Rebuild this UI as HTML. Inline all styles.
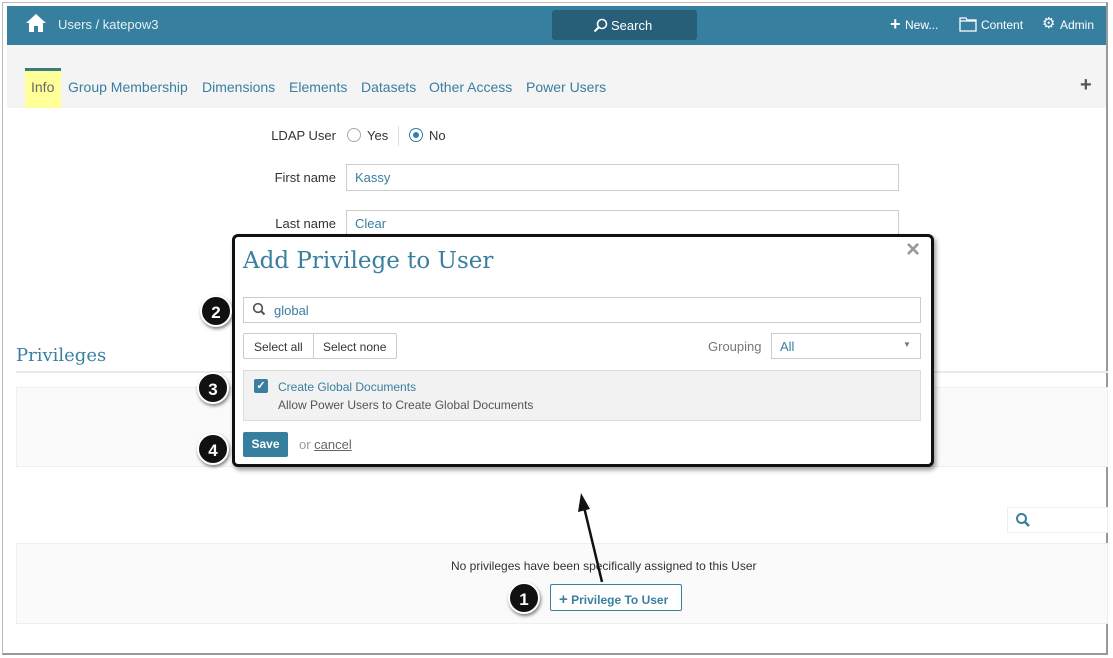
<!DOCTYPE html>
<html><head><meta charset="utf-8"><style>
*{box-sizing:border-box;margin:0;padding:0}
body{width:1113px;height:658px;background:#fff;font-family:"Liberation Sans",sans-serif;position:relative;overflow:hidden;font-size:13px;color:#333}
.a{position:absolute}
.frame{left:2px;top:2px;width:1106px;height:653px;border:1px solid #bbb;border-right:2px solid #999;border-bottom:2px solid #999}
.hdr{left:7px;top:6px;width:1099px;height:39px;background:#377f9e;color:#fff}
.tabs{left:7px;top:45px;width:1099px;height:63px;background:#f4f4f4}
.tab{top:79px;font-size:14px;color:#3a7ea0}
.lbl{font-size:13px;color:#333;text-align:right;width:100px}
.inp{border:1px solid #ccc;height:27px;font-size:13px;color:#3a7ea0;padding:5px 8px;background:#fff}
.num{width:32px;height:32px;border-radius:50%;background:#111;color:#fff;font-weight:bold;font-size:17px;text-align:center;line-height:31px;border:2px solid #fff;box-shadow:1px 2px 3px rgba(0,0,0,.5)}
</style></head><body>
<div class="a frame"></div>
<div class="a hdr">
 <svg class="a" style="left:18px;top:7px" width="22" height="20" viewBox="0 0 22 20"><path d="M11 1 L1 10 L4 10 L4 19 L9 19 L9 13 L13 13 L13 19 L18 19 L18 10 L21 10 Z" fill="#fff"/></svg>
 <div class="a" style="left:51px;top:11px;font-size:13px;color:#e6f0f5">Users / katepow3</div>
 <div class="a" style="left:545px;top:4px;width:145px;height:30px;background:#275e78;border-radius:3px"></div>
 <svg class="a" style="left:586px;top:12px" width="15" height="15" viewBox="0 0 15 15"><circle cx="9" cy="6" r="4.5" stroke="#fff" stroke-width="1.6" fill="none"/><path d="M5.5 9.5 L1.5 13.5" stroke="#fff" stroke-width="2"/></svg>
 <div class="a" style="left:604px;top:12px;font-size:13px">Search</div>
 <div class="a" style="left:883px;top:9px;font-size:18px;font-weight:bold;line-height:18px">+</div>
 <div class="a" style="left:898px;top:12px;font-size:12px">New...</div>
 <svg class="a" style="left:952px;top:10px" width="18" height="16" viewBox="0 0 18 16"><path d="M1 2 H7 L8 4 H17 V15 H1 Z M1 5 H17" stroke="#fff" stroke-width="1.3" fill="none"/></svg>
 <div class="a" style="left:974px;top:12px;font-size:12px">Content</div>
 <div class="a" style="left:1035px;top:8px;font-size:15px">⚙</div>
 <div class="a" style="left:1053px;top:12px;font-size:12px">Admin</div>
</div>
<div class="a tabs"></div>
<div class="a" style="left:25px;top:68px;width:36px;height:40px;background:#ffff99;border-top:3px solid #3a7d7c"></div>
<div class="a tab" style="left:31px;color:#666">Info</div>
<div class="a tab" style="left:68px">Group Membership</div>
<div class="a tab" style="left:202px">Dimensions</div>
<div class="a tab" style="left:289px">Elements</div>
<div class="a tab" style="left:361px">Datasets</div>
<div class="a tab" style="left:429px">Other Access</div>
<div class="a tab" style="left:526px">Power Users</div>
<div class="a" style="left:1080px;top:74px;font-size:20px;font-weight:bold;color:#555">+</div>

<div class="a lbl" style="left:236px;top:128px">LDAP User</div>
<div class="a" style="left:347px;top:128px;width:14px;height:14px;border:1px solid #aaa;border-radius:50%"></div>
<div class="a" style="left:367px;top:128px">Yes</div>
<div class="a" style="left:398px;top:126px;width:1px;height:20px;background:#ddd"></div>
<div class="a" style="left:409px;top:128px;width:14px;height:14px;border:1px solid #3a7ea0;border-radius:50%"><div style="margin:3px;width:6px;height:6px;border-radius:50%;background:#3a7ea0"></div></div>
<div class="a" style="left:429px;top:128px">No</div>
<div class="a lbl" style="left:236px;top:170px">First name</div>
<div class="a inp" style="left:346px;top:164px;width:553px">Kassy</div>
<div class="a lbl" style="left:236px;top:216px">Last name</div>
<div class="a inp" style="left:346px;top:210px;width:553px">Clear</div>

<div class="a" style="left:16px;top:345px;font-family:'DejaVu Serif',serif;font-size:18px;color:#3a7ea0">Privileges</div>
<div class="a" style="left:16px;top:371px;width:1092px;height:2px;background:#e3ecf0"></div>
<div class="a" style="left:16px;top:387px;width:1092px;height:80px;background:#fafafa;border:1px solid #eee"></div>
<div class="a" style="left:1007px;top:507px;width:101px;height:26px;border:1px solid #eee;background:#fff"></div>
<svg class="a" style="left:1015px;top:512px" width="16" height="16" viewBox="0 0 16 16"><circle cx="6.5" cy="6.5" r="4.5" stroke="#3a7ea0" stroke-width="2" fill="none"/><path d="M10 10 L14 14" stroke="#3a7ea0" stroke-width="2.5"/></svg>
<div class="a" style="left:16px;top:543px;width:1092px;height:81px;background:#fafafa;border:1px solid #eee"></div>
<div class="a" style="left:451px;top:559px;font-size:12px">No privileges have been specifically assigned to this User</div>
<div class="a" style="left:550px;top:584px;width:132px;height:27px;border:1px solid #3a7ea0;border-radius:2px;background:#fff;color:#3a7ea0;font-size:12px;font-weight:bold;padding:6px 0 0 8px"><span style="font-size:15px">+</span> Privilege To User</div>
<div class="a num" style="left:508px;top:582px">1</div>
<svg class="a" style="left:570px;top:485px" width="40" height="100"><path d="M32 97 L14 22" stroke="#111" stroke-width="2.5"/><path d="M11 8 L20 24 L8 27 Z" fill="#111"/></svg>

<div class="a" style="left:232px;top:234px;width:702px;height:233px;border:3px solid #111;border-radius:6px;background:#fff;box-shadow:2px 3px 5px rgba(0,0,0,.4)"></div>
<div class="a" style="left:243px;top:248px;font-family:'DejaVu Serif',serif;font-size:23px;color:#3a7ea0">Add Privilege to User</div>
<div class="a" style="left:906px;top:236px;font-size:24px;color:#999;font-weight:bold">×</div>
<div class="a inp" style="left:243px;top:297px;width:678px;height:26px;color:#3a7ea0;padding-left:30px;padding-top:5px">global</div>
<svg class="a" style="left:252px;top:302px" width="14" height="14" viewBox="0 0 14 14"><circle cx="6" cy="6" r="4.3" stroke="#555" stroke-width="1.7" fill="none"/><path d="M9 9 L12.5 12.5" stroke="#555" stroke-width="2"/></svg>
<div class="a" style="left:243px;top:333px;width:154px;height:26px;border:1px solid #ccc;border-radius:2px;font-size:12px"><span class="a" style="left:10px;top:6px">Select all</span><span class="a" style="left:69px;top:0;width:1px;height:24px;background:#ccc"></span><span class="a" style="left:79px;top:6px">Select none</span></div>
<div class="a" style="left:708px;top:339px;color:#777">Grouping</div>
<div class="a inp" style="left:771px;top:333px;width:150px;height:26px">All</div>
<div class="a" style="left:903px;top:340px;font-size:8px;color:#777">▼</div>
<div class="a" style="left:243px;top:370px;width:678px;height:51px;background:#f2f2f2;border:1px solid #ddd"></div>
<div class="a" style="left:254px;top:379px;width:14px;height:14px;background:#3a7ea0;border-radius:2px;color:#fff;font-size:11px;text-align:center;line-height:14px;font-weight:bold">✓</div>
<div class="a" style="left:278px;top:380px;font-size:12px;color:#3a7ea0">Create Global Documents</div>
<div class="a" style="left:278px;top:398px;font-size:12px;color:#555">Allow Power Users to Create Global Documents</div>
<div class="a" style="left:243px;top:432px;width:45px;height:25px;background:#377f9e;border-radius:2px;color:#fff;font-weight:bold;font-size:12px;text-align:center;line-height:25px">Save</div>
<div class="a" style="left:299px;top:437px;color:#999">or <span style="color:#666;text-decoration:underline">cancel</span></div>
<div class="a num" style="left:200px;top:295px">2</div>
<div class="a num" style="left:197px;top:372px">3</div>
<div class="a num" style="left:197px;top:433px">4</div>
</body></html>
